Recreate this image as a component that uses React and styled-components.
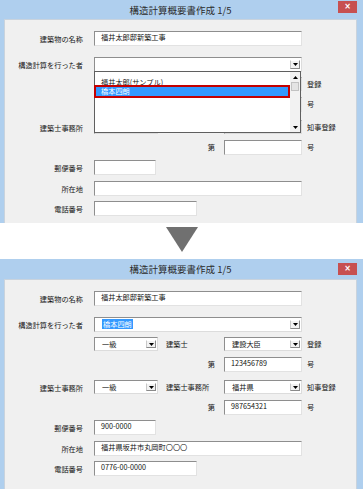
import React from 'react';
import styled, { createGlobalStyle } from 'styled-components';

const Global = createGlobalStyle`
  html, body { margin: 0; padding: 0; background: #ffffff; }
  body {
    font-family: "Noto Sans CJK JP", "Noto Sans", sans-serif;
    overflow: hidden;
  }
`;

const Page = styled.div`
  width: 363px;
  height: 489px;
  overflow: hidden;
  display: flex;
  flex-direction: column;
  background: #ffffff;
`;

const Window = styled.section`
  flex: none;
  height: ${p => p.$h}px;
  overflow: hidden;
  box-sizing: border-box;
  background: #afcfee;
  padding: 0 6px 0 4px;
  display: flex;
  flex-direction: column;
`;

const TitleBar = styled.header`
  flex: none;
  height: ${p => p.$h}px;
  display: grid;
  grid-template-columns: 1fr auto 1fr;
  align-items: center;
`;

const TitleText = styled.div`
  grid-column: 2;
  font-size: 9.5px;
  line-height: 12px;
  color: #2b2b2b;
  white-space: nowrap;
`;

const CloseButton = styled.div`
  grid-column: 3;
  justify-self: end;
  align-self: start;
  margin-top: ${p => p.$top}px;
  width: 19px;
  height: 12px;
  background: #c75050;
  color: #ffffff;
  font-family: "DejaVu Sans", sans-serif;
  font-weight: bold;
  font-size: 8px;
  line-height: 12px;
  text-align: center;
`;

const Panel = styled.div`
  flex: 1;
  background: #f0f0f0;
  border: 1px solid #c9d3dd;
  border-bottom: none;
  padding-top: 11px;
`;

const Form = styled.div`
  display: flex;
  flex-direction: column;
`;

const Row = styled.div`
  display: grid;
  grid-template-columns: 89px 64px 66px 78px 1fr;
  height: 15px;
  margin-top: ${p => p.$gap}px;
`;

const Label = styled.div`
  grid-column: 1;
  text-align: right;
  padding-right: 11px;
  padding-top: 1px;
  font-size: 7.2px;
  line-height: 15px;
  color: #141414;
  white-space: nowrap;
`;

const SubLabel = styled.div`
  grid-column: 3;
  text-align: ${p => (p.$right ? 'right' : 'left')};
  padding: 0 9px 0 8px;
  font-size: 7.2px;
  line-height: 15px;
  color: #141414;
  white-space: nowrap;
`;

const Suffix = styled.div`
  grid-column: 5;
  padding-left: 5px;
  font-size: 7.2px;
  line-height: 15px;
  color: #141414;
  white-space: nowrap;
`;

const TextBox = styled.div`
  grid-column: ${p => p.$col};
  width: ${p => (p.$w ? `${p.$w}px` : 'auto')};
  box-sizing: border-box;
  height: 15px;
  background: #ffffff;
  border: 1px solid;
  border-color: #8e8e8e #e2e2e2 #e2e2e2 #8e8e8e;
  padding-left: 6px;
  font-size: 7.2px;
  line-height: 11px;
  color: #111;
  white-space: nowrap;
  overflow: hidden;
`;

const Combo = styled.div`
  grid-column: ${p => p.$col};
  position: relative;
  box-sizing: border-box;
  height: ${p => p.$h || 14}px;
  background: #ffffff;
  border: 1px solid;
  border-color: #8e8e8e #dcdcdc #dcdcdc #8e8e8e;
  display: flex;
  align-items: stretch;
`;

const ComboValue = styled.div`
  flex: 1;
  padding-left: 7px;
  padding-top: 1px;
  font-size: 7.2px;
  line-height: 10px;
  color: #111;
  white-space: nowrap;
  overflow: hidden;
`;

const Highlight = styled.span`
  display: inline-block;
  background: #3399ff;
  color: #ffffff;
  padding: 0 1px;
  line-height: 10px;
`;

const DropButton = styled.div`
  flex: none;
  width: 10px;
  margin: 2px 1px 2px 0;
  box-sizing: border-box;
  background: #f2f2f2;
  border: 1px solid;
  border-color: #ffffff #8a8a8a #8a8a8a #c8c8c8;
  display: flex;
  align-items: center;
  justify-content: center;
`;

const DropList = styled.div`
  position: absolute;
  top: 100%;
  left: -1px;
  right: 0;
  height: 62px;
  box-sizing: border-box;
  z-index: 10;
  background: #ffffff;
  border: 1px solid #5f5f5f;
  display: grid;
  grid-template-columns: 1fr 10px;
`;

const Items = styled.div`
  padding-top: 6px;
  display: flex;
  flex-direction: column;
`;

const Item = styled.div`
  position: relative;
  height: 9px;
  margin-right: 1px;
  padding-left: 6px;
  font-size: 7.2px;
  line-height: 9px;
  white-space: nowrap;
  color: ${p => (p.$selected ? '#ffffff' : '#111')};
  background: ${p => (p.$selected ? '#3399ff' : 'transparent')};
`;

const Marker = styled.div`
  position: absolute;
  top: -2px;
  bottom: -2px;
  left: -1px;
  right: -1px;
  border: 2px solid #c40000;
`;

const ScrollBar = styled.div`
  display: flex;
  flex-direction: column;
  background: #f2f2f2;
`;

const ScrollButton = styled.div`
  flex: none;
  height: 10px;
  display: flex;
  align-items: center;
  justify-content: center;
  background: #f2f2f2;
`;

const Thumb = styled.div`
  flex: none;
  height: 7px;
  margin: 0 1px;
  background: #e4e4e4;
  border: 1px solid #c2c2c2;
`;

const Track = styled.div`
  flex: 1;
`;

const Separator = styled.div`
  flex: none;
  height: 36px;
  display: flex;
  justify-content: center;
  padding-top: 4px;
  box-sizing: border-box;
`;

function Caret({ up }) {
  return (
    <svg width="5" height="3" viewBox="0 0 5 3">
      <polygon points={up ? '0,3 5,3 2.5,0' : '0,0 5,0 2.5,3'} fill="#000" />
    </svg>
  );
}

function ComboBox({ col, value, selected, h, children }) {
  return (
    <Combo $col={col} $h={h}>
      <ComboValue>{selected ? <Highlight>{value}</Highlight> : value}</ComboValue>
      <DropButton>
        <Caret />
      </DropButton>
      {children}
    </Combo>
  );
}

function PersonList() {
  return (
    <DropList>
      <Items>
        <Item>福井太郎(サンプル)</Item>
        <Item $selected>
          橋本四朗
          <Marker />
        </Item>
      </Items>
      <ScrollBar>
        <ScrollButton>
          <Caret up />
        </ScrollButton>
        <Thumb />
        <Track />
        <ScrollButton>
          <Caret />
        </ScrollButton>
      </ScrollBar>
    </DropList>
  );
}

function Dialog({ h, titleH, closeTop, v, open }) {
  return (
    <Window $h={h}>
      <TitleBar $h={titleH}>
        <TitleText>構造計算概要書作成 1/5</TitleText>
        <CloseButton $top={closeTop}>×</CloseButton>
      </TitleBar>
      <Panel>
        <Form>
          <Row $gap={0}>
            <Label>建築物の名称</Label>
            <TextBox $col="2 / 5">{v.name}</TextBox>
          </Row>
          <Row $gap={11}>
            <Label>構造計算を行った者</Label>
            <ComboBox col="2 / 5" h={15} value={v.person} selected={!!v.person}>
              {open && <PersonList />}
            </ComboBox>
          </Row>
          <Row $gap={5}>
            <ComboBox col="2" value={v.grade1} />
            <SubLabel>建築士</SubLabel>
            <ComboBox col="4" value={v.auth1} />
            <Suffix>登録</Suffix>
          </Row>
          <Row $gap={5}>
            <SubLabel $right>第</SubLabel>
            <TextBox $col="4">{v.no1}</TextBox>
            <Suffix>号</Suffix>
          </Row>
          <Row $gap={8}>
            <Label>建築士事務所</Label>
            <ComboBox col="2" value={v.grade2} />
            <SubLabel>建築士事務所</SubLabel>
            <ComboBox col="4" value={v.auth2} />
            <Suffix>知事登録</Suffix>
          </Row>
          <Row $gap={5}>
            <SubLabel $right>第</SubLabel>
            <TextBox $col="4">{v.no2}</TextBox>
            <Suffix>号</Suffix>
          </Row>
          <Row $gap={5}>
            <Label>郵便番号</Label>
            <TextBox $col="2" $w={62}>{v.zip}</TextBox>
          </Row>
          <Row $gap={6}>
            <Label>所在地</Label>
            <TextBox $col="2 / 5">{v.address}</TextBox>
          </Row>
          <Row $gap={5}>
            <Label>電話番号</Label>
            <TextBox $col="2 / 4" $w={103}>{v.tel}</TextBox>
          </Row>
        </Form>
      </Panel>
    </Window>
  );
}

const before = {
  name: '福井太郎邸新築工事',
  person: '',
  grade1: '',
  auth1: '',
  no1: '',
  grade2: '',
  auth2: '',
  no2: '',
  zip: '',
  address: '',
  tel: '',
};

const after = {
  name: '福井太郎邸新築工事',
  person: '橋本四朗',
  grade1: '一級',
  auth1: '建設大臣',
  no1: '123456789',
  grade2: '一級',
  auth2: '福井県',
  no2: '987654321',
  zip: '900-0000',
  address: '福井県坂井市丸岡町〇〇〇',
  tel: '0776-00-0000',
};

export default function App() {
  return (
    <Page>
      <Global />
      <Dialog h={223} titleH={19} closeTop={1} v={before} open />
      <Separator>
        <svg width="32" height="26" viewBox="0 0 32 26">
          <polygon points="0,0 32,0 16,25" fill="#707070" />
        </svg>
      </Separator>
      <Dialog h={230} titleH={20} closeTop={4} v={after} />
    </Page>
  );
}
